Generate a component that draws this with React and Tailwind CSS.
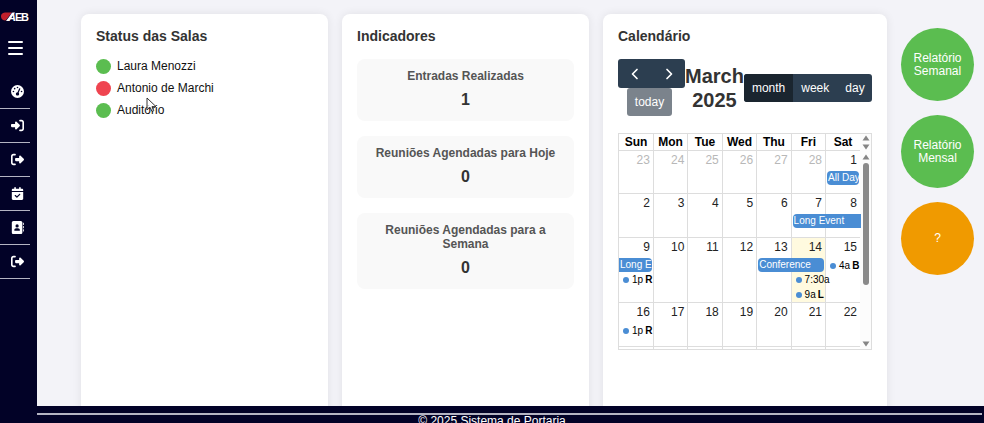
import React from "react";
import {
  FaGaugeHigh,
  FaRightToBracket,
  FaRightFromBracket,
  FaCalendarCheck,
  FaAddressBook,
} from "react-icons/fa6";

const navItems = [
  { label: "Painel", Icon: FaGaugeHigh },
  { label: "Entrada", Icon: FaRightToBracket },
  { label: "Saída", Icon: FaRightFromBracket },
  { label: "Agenda", Icon: FaCalendarCheck },
  { label: "Contatos", Icon: FaAddressBook },
  { label: "Sair", Icon: FaRightFromBracket },
];

const rooms = [
  { name: "Laura Menozzi", color: "bg-[#5bbd50]" },
  { name: "Antonio de Marchi", color: "bg-[#ef4450]" },
  { name: "Auditório", color: "bg-[#5bbd50]" },
];

const indicators = [
  { title: "Entradas Realizadas", value: 1 },
  { title: "Reuniões Agendadas para Hoje", value: 0 },
  { title: "Reuniões Agendadas para a Semana", value: 0 },
];

const weekdays = ["Sun", "Mon", "Tue", "Wed", "Thu", "Fri", "Sat"];

const weeks = [
  {
    height: "h-[42px]",
    days: [23, 24, 25, 26, 27, 28, 1],
    events: { 1: [{ bar: "All Day", width: "w-[32px]", shape: "rounded-sm ml-px" }] },
  },
  {
    height: "h-[43px]",
    days: [2, 3, 4, 5, 6, 7, 8],
    events: { 7: [{ bar: "Long Event", width: "w-[68px]", shape: "rounded-l-sm ml-px" }] },
  },
  {
    height: "h-[64px]",
    days: [9, 10, 11, 12, 13, 14, 15],
    events: {
      9: [
        { bar: "Long E", width: "w-[33px]", shape: "rounded-r-sm" },
        { time: "1p", text: "R" },
      ],
      13: [{ bar: "Conference", width: "w-[66px]", shape: "rounded-sm ml-px" }],
      14: [{ spacer: true }, { time: "7:30a", text: "" }, { time: "9a", text: "L" }],
      15: [{ time: "4a", text: "B" }],
    },
  },
  {
    height: "h-[43px]",
    days: [16, 17, 18, 19, 20, 21, 22],
    events: { 16: [{ time: "1p", text: "R" }] },
  },
];

function Logo() {
  return (
    <svg viewBox="0 0 30 12" className="h-3 w-[30px]" role="img" aria-label="AEB">
      <path d="M1 5.500C1 2.500 3 1.500 6 1.500H12L5.500 9.500C3 9.500 1 8 1 5.500Z" fill="#c0202c" />
      <path d="M6 10L12.500 1.500H15L9 10Z" fill="#ffffff" />
      <text y="10" fill="#ffffff" fontSize="11" fontWeight="bold" fontFamily="Liberation Sans, Arial, sans-serif">
        <tspan x="8" fontStyle="italic">A</tspan>
        <tspan x="15">E</tspan>
        <tspan x="21">B</tspan>
      </text>
    </svg>
  );
}

function Sidebar() {
  return (
    <aside className="flex w-[37px] shrink-0 flex-col bg-[#020227] pt-[11px] text-white">
      <Logo />
      <button type="button" aria-label="Menu" className="mt-[18px] ml-2 flex w-[15px] flex-col gap-1">
        <span className="h-[2px] w-full rounded-full bg-white" />
        <span className="h-[2px] w-full rounded-full bg-white" />
        <span className="h-[2px] w-full rounded-full bg-white" />
      </button>
      <nav className="mt-5 w-[30px]">
        {navItems.map(({ label, Icon }, i) => (
          <a
            key={i}
            href="#"
            aria-label={label}
            className="flex h-[34px] items-center justify-center border-b border-[#b4b4c2] pl-[5px]"
          >
            <Icon size={13} />
          </a>
        ))}
      </nav>
    </aside>
  );
}

function Card({ title, children }) {
  return (
    <section className="min-w-0 rounded-lg bg-white p-[15px] shadow-[0_0_10px_rgba(0,0,0,0.08)]">
      <h2 className="mb-[15px] text-[14px] leading-[15px] font-bold text-[#333]">{title}</h2>
      {children}
    </section>
  );
}

function CalendarEvent({ event }) {
  if (event.spacer) return <div className="h-[14px]" />;
  if (event.bar) {
    return (
      <div
        className={`relative z-10 h-[14px] overflow-hidden bg-[#4a8dd4] pl-px text-[10px] leading-[14px] whitespace-nowrap text-white ${event.width} ${event.shape}`}
      >
        {event.bar}
      </div>
    );
  }
  return (
    <div className="relative z-10 flex h-[15px] items-center pl-1 text-[10px] leading-[15px] whitespace-nowrap text-black">
      <span className="mr-[3px] size-[6px] shrink-0 rounded-full bg-[#4a8dd4]" />
      {event.time}
      {event.text && <b className="ml-[2px]">{event.text}</b>}
    </div>
  );
}

function Arrow({ down }) {
  return (
    <svg viewBox="0 0 8 6" className="h-[6px] w-2" aria-hidden="true">
      <path d={down ? "M0.500 0.500H7.500L4 5.500Z" : "M0.500 5.500H7.500L4 0.500Z"} fill="#858585" />
    </svg>
  );
}

function MonthGrid() {
  return (
    <div className="mt-[17px] flex h-[217px] overflow-hidden border border-[#ddd]">
      <div className="min-w-0 flex-1">
        <table className="w-full table-fixed border-collapse">
          <thead>
            <tr className="h-4">
              {weekdays.map((d) => (
                <th key={d} className="border-r border-b border-[#ddd] p-0 text-[12px] leading-4 font-bold text-black last:border-r-0">
                  {d}
                </th>
              ))}
            </tr>
          </thead>
          <tbody>
            {weeks.map((week, w) => (
              <tr key={w}>
                {week.days.map((day) => (
                  <td
                    key={day}
                    className={`border-r border-b border-[#ddd] p-0 align-top last:border-r-0 ${day === 14 ? "bg-[#fffadf]" : ""}`}
                  >
                    <div className={week.height}>
                      <div
                        className={`h-5 pt-[2px] pr-[3px] text-right text-[12px] leading-[14px] ${
                          w === 0 && day > 20 ? "text-[#b8b8b8]" : "text-[#222]"
                        }`}
                      >
                        {day}
                      </div>
                      {(week.events[day] || []).map((event, i) => (
                        <CalendarEvent key={i} event={event} />
                      ))}
                    </div>
                  </td>
                ))}
              </tr>
            ))}
            <tr>
              {weekdays.map((d) => (
                <td key={d} className="h-[2px] border-r border-[#ddd] p-0 last:border-r-0" />
              ))}
            </tr>
          </tbody>
        </table>
      </div>
      <div className="flex w-[11px] shrink-0 flex-col items-center bg-[#fcfcfc]" aria-hidden="true">
        <div className="flex h-4 flex-col justify-between pt-px">
          <Arrow />
          <Arrow down />
        </div>
        <div className="flex min-h-0 flex-1 flex-col items-center pt-1 pb-[2px]">
          <Arrow />
          <div className="mt-[3px] h-[122px] w-[6px] rounded-full bg-[#8a8a8a]" />
          <div className="mt-auto flex">
            <Arrow down />
          </div>
        </div>
      </div>
    </div>
  );
}

function Chevron({ left }) {
  return (
    <svg viewBox="0 0 8 12" className="h-3 w-2" fill="none" stroke="currentColor" strokeWidth="1.700" strokeLinecap="round" strokeLinejoin="round" aria-hidden="true">
      <path d={left ? "M6 1.500L1.500 6L6 10.500" : "M2 1.500L6.500 6L2 10.500"} />
    </svg>
  );
}

function CalendarToolbar() {
  return (
    <div className="flex items-center justify-between text-[12px] leading-[14px] text-white">
      <div className="flex flex-col items-center pr-1">
        <div className="-mr-1 flex overflow-hidden rounded-[3px] bg-[#2c3e50]">
          <button type="button" aria-label="Anterior" className="flex h-[29px] w-[34px] items-center justify-center">
            <Chevron left />
          </button>
          <button type="button" aria-label="Próximo" className="flex h-[29px] w-[33px] items-center justify-center">
            <Chevron />
          </button>
        </div>
        <button type="button" disabled className="h-7 rounded-[3px] bg-[#7b838c] px-2">
          today
        </button>
      </div>
      <h3 className="w-min text-center text-[20px] leading-6 font-bold text-[#333]">March 2025</h3>
      <div className="flex overflow-hidden rounded-[3px] bg-[#2c3e50]">
        <button type="button" className="h-7 bg-[#1a252f] px-2">month</button>
        <button type="button" className="h-7 px-2">week</button>
        <button type="button" className="h-7 px-2">day</button>
      </div>
    </div>
  );
}

function RoundButton({ color, children }) {
  return (
    <button
      type="button"
      className={`flex size-[73px] items-center justify-center rounded-full text-center text-[12px] leading-[13px] text-white ${color}`}
    >
      <span className="w-min">{children}</span>
    </button>
  );
}

export default function App() {
  return (
    <div className="h-screen overflow-hidden bg-[#020227] font-['Liberation_Sans',Arial,sans-serif]">
      <div className="flex h-[calc(100vh-17px)] overflow-hidden bg-[#f3f3f8]">
        <Sidebar />
        <main className="flex min-w-0 flex-1 pl-11">
          <div className="grid h-[480px] min-w-0 flex-1 grid-cols-[1fr_1fr_284px] gap-[14px] pt-[14px]">
            <Card title="Status das Salas">
              <ul className="flex flex-col gap-[7px]">
                {rooms.map((room) => (
                  <li key={room.name} className="flex items-center gap-[6px] text-[12px] leading-[15px] text-[#111]">
                    <span className={`size-[15px] rounded-full ${room.color}`} />
                    {room.name}
                  </li>
                ))}
              </ul>
            </Card>
            <Card title="Indicadores">
              <div className="flex flex-col gap-[15px]">
                {indicators.map((item) => (
                  <div key={item.title} className="rounded-lg bg-[#f9f9f9] px-4 pt-[10px] pb-3 text-center">
                    <h3 className="text-[12px] leading-[14px] font-bold text-[#555]">{item.title}</h3>
                    <p className="mt-2 text-[16px] leading-[18px] font-bold text-[#333]">{item.value}</p>
                  </div>
                ))}
              </div>
            </Card>
            <Card title="Calendário">
              <CalendarToolbar />
              <MonthGrid />
            </Card>
          </div>
          <div className="flex shrink-0 flex-col gap-[14px] pt-7 pr-[10px] pl-[14px]">
            <RoundButton color="bg-[#5bbd50]">Relatório Semanal</RoundButton>
            <RoundButton color="bg-[#5bbd50]">Relatório Mensal</RoundButton>
            <RoundButton color="bg-[#f09a00]">?</RoundButton>
          </div>
        </main>
      </div>
      <footer className="pt-[7px] text-center text-[12px] leading-[13px] text-white">
        <hr className="mr-[2px] ml-[37px] border-t-2 border-[#b4b4c2]" />
        <p>© 2025 Sistema de Portaria</p>
      </footer>
      <svg viewBox="0 0 12 16" className="pointer-events-none absolute top-[97px] left-[146px] z-20 h-4 w-3" aria-hidden="true">
        <path d="M1 1V13L4 10.200L6 14.500L7.800 13.700L6 9.600H10Z" fill="#ffffff" fillOpacity="0.700" stroke="#222222" strokeWidth="0.900" />
      </svg>
    </div>
  );
}
